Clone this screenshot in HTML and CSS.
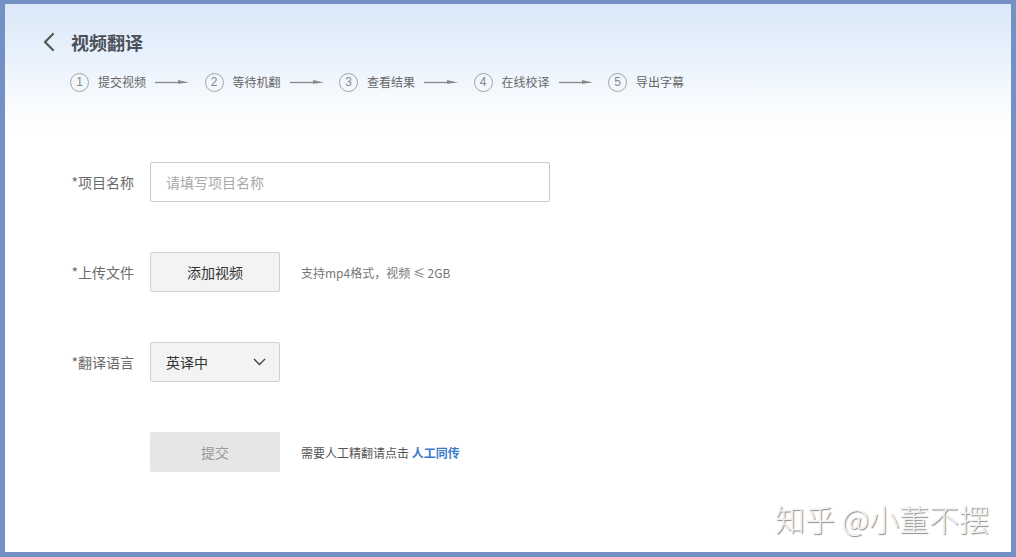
FILE: index.html
```html
<!DOCTYPE html>
<html lang="zh-CN">
<head>
<meta charset="utf-8">
<title>视频翻译</title>
<link rel="stylesheet" href="styles.css">
</head>
<body>
<div class="frame">
  <header class="header">
    <div class="title-row">
      <svg class="back" width="14" height="20" viewBox="0 0 14 20"><path d="M11 2 L3 10 L11 18" fill="none" stroke="#555" stroke-width="2.2" stroke-linecap="round" stroke-linejoin="round"/></svg>
      <h1 class="title">视频翻译</h1>
    </div>
    <ol class="steps">
      <li class="step"><span class="num">1</span><span class="step-text">提交视频</span><svg class="arrow" width="34" height="8" viewBox="0 0 34 8"><path d="M0 4.5 H26" stroke="#888" stroke-width="1.3"/><path d="M23 2 L34 4.5 L23 5.8 Z" fill="#888"/></svg></li>
      <li class="step"><span class="num">2</span><span class="step-text">等待机翻</span><svg class="arrow" width="34" height="8" viewBox="0 0 34 8"><path d="M0 4.5 H26" stroke="#888" stroke-width="1.3"/><path d="M23 2 L34 4.5 L23 5.8 Z" fill="#888"/></svg></li>
      <li class="step"><span class="num">3</span><span class="step-text">查看结果</span><svg class="arrow" width="34" height="8" viewBox="0 0 34 8"><path d="M0 4.5 H26" stroke="#888" stroke-width="1.3"/><path d="M23 2 L34 4.5 L23 5.8 Z" fill="#888"/></svg></li>
      <li class="step"><span class="num">4</span><span class="step-text">在线校译</span><svg class="arrow" width="34" height="8" viewBox="0 0 34 8"><path d="M0 4.5 H26" stroke="#888" stroke-width="1.3"/><path d="M23 2 L34 4.5 L23 5.8 Z" fill="#888"/></svg></li>
      <li class="step"><span class="num">5</span><span class="step-text">导出字幕</span></li>
    </ol>
  </header>

  <form class="form">
    <div class="row">
      <label class="label">*项目名称</label>
      <div class="input">请填写项目名称</div>
    </div>
    <div class="row">
      <label class="label">*上传文件</label>
      <div class="btn">添加视频</div>
      <span class="hint">支持mp4格式，视频 ≤ 2GB</span>
    </div>
    <div class="row">
      <label class="label">*翻译语言</label>
      <div class="select"><span>英译中</span><svg width="13" height="8" viewBox="0 0 13 8"><path d="M1 1 L6.5 6.5 L12 1" fill="none" stroke="#444" stroke-width="1.4"/></svg></div>
    </div>
    <div class="row">
      <span class="label"></span>
      <div class="submit">提交</div>
      <span class="hint hint-dark">需要人工精翻请点击 <a class="link">人工同传</a></span>
    </div>
  </form>

  <div class="watermark">知乎 @小董不摆</div>
</div>
</body>
</html>
```
FILE: styles.css
```css
html, body {
  margin: 0;
  padding: 0;
}
body {
  font-family: "Noto Sans CJK SC", "Noto Sans", "Liberation Sans", sans-serif;
  color: #333;
  background: #7391c4;
}
.frame {
  position: relative;
  box-sizing: border-box;
  width: 1016px;
  height: 557px;
  border: 5px solid #7391c4;
  border-top-width: 4px;
  background: linear-gradient(to bottom, #dae8f8 0px, #e9f2fc 55px, #f8fbfe 100px, #ffffff 125px);
  overflow: hidden;
}
.header {
  padding: 23px 0 0 37px;
}
.title-row {
  display: flex;
  align-items: center;
  height: 30px;
}
.back {
  display: block;
}
.title {
  margin: 0 0 0 15px;
  font-size: 18px;
  font-weight: 700;
  color: #4b5058;
  line-height: 30px;
}
.steps {
  list-style: none;
  margin: 15px 0 0 28px;
  padding: 0;
  display: flex;
  align-items: center;
  height: 20px;
}
.step {
  display: flex;
  align-items: center;
}
.num {
  box-sizing: border-box;
  width: 19px;
  height: 19px;
  border: 1px solid #a4a4a4;
  border-radius: 50%;
  font-family: "Liberation Sans", sans-serif;
  font-size: 12px;
  line-height: 17px;
  text-align: center;
  color: #888;
}
.step-text {
  margin-left: 9px;
  font-size: 12px;
  line-height: 20px;
  color: #666;
}
.arrow {
  display: block;
  margin: 0 15.5px 0 9px;
}
.form {
  margin-top: 70px;
  padding-left: 50px;
  display: flex;
  flex-direction: column;
  gap: 50px;
}
.row {
  display: flex;
  align-items: center;
  height: 40px;
}
.label {
  width: 79px;
  margin-right: 16px;
  text-align: right;
  font-size: 14px;
  color: #6a6a6a;
}
.input {
  box-sizing: border-box;
  width: 400px;
  height: 40px;
  border: 1px solid #cacaca;
  border-radius: 2px;
  background: #fff;
  padding-left: 15px;
  font-size: 14px;
  line-height: 38px;
  color: #a9a9a9;
}
.btn {
  box-sizing: border-box;
  width: 130px;
  height: 40px;
  border: 1px solid #d0d0d0;
  border-radius: 2px;
  background: #f3f3f3;
  text-align: center;
  font-size: 14px;
  line-height: 38px;
  color: #333;
}
.hint {
  margin-left: 21px;
  font-size: 12px;
  color: #777;
}
.hint-dark {
  color: #555;
}
.link {
  color: #3a7bc8;
  font-weight: 700;
}
.select {
  box-sizing: border-box;
  width: 130px;
  height: 40px;
  border: 1px solid #d0d0d0;
  border-radius: 2px;
  background: #f3f3f3;
  display: flex;
  align-items: center;
  justify-content: space-between;
  padding: 0 13px 0 15px;
  font-size: 14px;
  color: #333;
}
.select svg {
  display: block;
}
.submit {
  width: 130px;
  height: 40px;
  border-radius: 2px;
  background: #e6e6e6;
  text-align: center;
  font-size: 14px;
  line-height: 40px;
  color: #999;
}
.watermark {
  position: absolute;
  right: 22px;
  bottom: 15px;
  font-size: 30px;
  font-weight: 300;
  line-height: 38px;
  color: #f2f2f2;
  text-shadow: 1px 1px 1px #8a8a8a;
}
```
